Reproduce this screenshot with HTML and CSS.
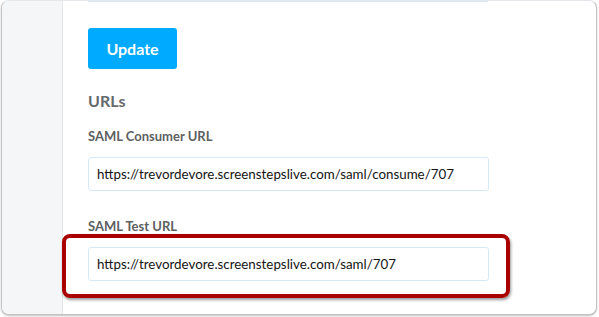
FILE: index.html
```html
<!DOCTYPE html>
<html>
<head>
<meta charset="utf-8">
<link rel="stylesheet" href="styles.css">
</head>
<body>
<div class="frame">
  <aside class="sidebar"></aside>
  <main class="main">
    <div class="prev-input"></div>
    <button class="btn">Update</button>
    <h2 class="section">URLs</h2>
    <label class="label">SAML Consumer URL</label>
    <div class="input">https://trevordevore.screenstepslive.com/saml/consume/707</div>
    <label class="label label-2">SAML Test URL</label>
    <div class="input">https://trevordevore.screenstepslive.com/saml/707</div>
    <div class="highlight"></div>
  </main>
</div>
</body>
</html>
```
FILE: styles.css
```css
html, body {
  margin: 0;
  padding: 0;
  background: #fff;
}
body {
  width: 599px;
  height: 317px;
  overflow: hidden;
  font-family: Lato, "Open Sans", sans-serif;
}
.frame {
  box-sizing: border-box;
  margin-left: 1px;
  width: 596px;
  height: 315px;
  border: 1px solid #c4c4c4;
  border-top-color: #e4e8ec;
  border-radius: 8px;
  box-shadow: 0 1px 2px rgba(0,0,0,0.25);
  display: flex;
  overflow: hidden;
  background: #fff;
}
.sidebar {
  width: 60px;
  flex: none;
  background: #f5f6f8;
  border-right: 1px solid #e3e6ea;
}
.main {
  position: relative;
  flex: 1;
  padding-left: 25px;
  display: flex;
  flex-direction: column;
  align-items: flex-start;
}
.prev-input {
  width: 400px;
  height: 1px;
  background: #d7e9f7;
}
.btn {
  margin-top: 26px;
  width: 89px;
  height: 41px;
  border: none;
  border-radius: 3px;
  background: #00aaff;
  color: #fff;
  font-family: Lato, sans-serif;
  font-weight: 700;
  font-size: 16px;
  padding: 0;
}
.section {
  margin: 22px 0 0;
  font-size: 16px;
  line-height: 20px;
  font-weight: 700;
  color: #666a6d;
}
.label {
  margin-top: 17px;
  font-size: 13px;
  line-height: 16px;
  font-weight: 700;
  color: #5d5f61;
}
.label-2 {
  margin-top: 27px;
}
.input {
  box-sizing: border-box;
  margin-top: 13px;
  width: 401px;
  height: 34px;
  border: 1px solid #d7e9f7;
  border-radius: 3px;
  padding-left: 8px;
  font-size: 13.35px;
  line-height: 32px;
  color: #141414;
}
.highlight {
  position: absolute;
  left: -1px;
  top: 233px;
  width: 448px;
  height: 64px;
  box-sizing: border-box;
  border: 4px solid #a90000;
  border-radius: 8px;
  box-shadow: 1px 2px 3px rgba(0,0,0,0.4);
}
```
